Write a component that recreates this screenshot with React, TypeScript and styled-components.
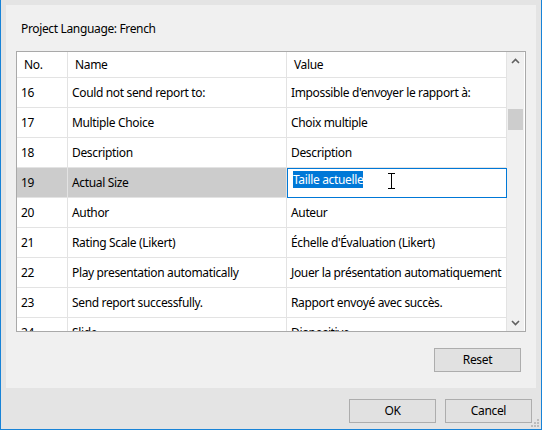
import React from "react"
import styled, { createGlobalStyle } from "styled-components"

const GlobalStyle = createGlobalStyle`
  body {
    margin: 0;
    background: #e4e4e4;
    font-family: "Noto Sans", "Liberation Sans", sans-serif;
    font-size: 12px;
    letter-spacing: -0.35px;
    color: #000;
  }
`

const rows = [
  { no: 16, name: "Could not send report to:", value: "Impossible d'envoyer le rapport à:" },
  { no: 17, name: "Multiple Choice", value: "Choix multiple" },
  { no: 18, name: "Description", value: "Description" },
  { no: 19, name: "Actual Size", value: "Taille actuelle", editing: true },
  { no: 20, name: "Author", value: "Auteur" },
  { no: 21, name: "Rating Scale (Likert)", value: "Échelle d'Évaluation (Likert)" },
  { no: 22, name: "Play presentation automatically", value: "Jouer la présentation automatiquement" },
  { no: 23, name: "Send report successfully.", value: "Rapport envoyé avec succès." },
  { no: 24, name: "Slide", value: "Diapositive" },
]

const Window = styled.div`
  width: 542px;
  height: 430px;
  box-sizing: border-box;
  border: 1px solid #1883d7;
  border-top: none;
  background: #e4e4e4;
  display: flex;
  flex-direction: column;
  padding: 5px 5px 0 5px;
`

const Panel = styled.div`
  background: #f0f0f0;
  height: 383px;
  box-sizing: border-box;
  padding: 0 10px 0 10px;
  display: flex;
  flex-direction: column;
`

const Label = styled.div`
  height: 46px;
  display: flex;
  align-items: center;
  padding-left: 5px;
  padding-top: 1px;
  box-sizing: border-box;
`

const GridBox = styled.div`
  height: 281px;
  box-sizing: border-box;
  border: 1px solid #a9a9a9;
  background: #fff;
  display: flex;
  overflow: hidden;
`

const Table = styled.div`
  width: 490px;
  display: grid;
  grid-template-columns: 51px 219px 220px;
  grid-auto-rows: 30px;
  grid-template-rows: 26px;
  align-content: start;
  overflow: hidden;
`

const Cell = styled.div<{ $head?: boolean; $sel?: boolean }>`
  box-sizing: border-box;
  border-right: 1px solid #e3e3e3;
  border-bottom: 1px solid #e3e3e3;
  display: flex;
  align-items: center;
  padding-left: ${(p) => (p.$head ? "7px" : "4px")};
  padding-bottom: 1px;
  white-space: nowrap;
  overflow: hidden;
  background: ${(p) => (p.$sel ? "#cccccc" : "transparent")};
`

const EditCell = styled.div`
  box-sizing: border-box;
  border: 1px solid #0078d7;
  background: #fff;
  position: relative;
  padding: 3px 0 0 5px;
  line-height: 15px;
`

const Selected = styled.span`
  background: #0078d7;
  color: #fff;
`

const Cursor = styled.svg`
  position: absolute;
  left: 99px;
  top: 4px;
`

const Scrollbar = styled.div`
  width: 17px;
  background: #f0f0f0;
  display: flex;
  flex-direction: column;
  align-items: center;
`

const Arrow = styled.div`
  height: 17px;
  display: flex;
  align-items: center;
  justify-content: center;
`

const Track = styled.div`
  flex: 1;
  width: 100%;
  padding-top: 40px;
  box-sizing: border-box;
`

const Thumb = styled.div`
  width: 15px;
  margin-left: 1px;
  height: 21px;
  background: #cdcdcd;
`

const ResetRow = styled.div`
  display: flex;
  justify-content: flex-end;
  padding: 16px 5px 0 0;
`

const Button = styled.button`
  width: 87px;
  height: 24px;
  box-sizing: border-box;
  border: 1px solid #adadad;
  background: #e1e1e1;
  font-family: "Noto Sans", "Liberation Sans", sans-serif;
  font-size: 12px;
  letter-spacing: -0.35px;
  color: #000;
  padding: 0 0 1px;
`

const Footer = styled.div`
  flex: 1;
  display: flex;
  justify-content: flex-end;
  align-items: flex-start;
  gap: 9px;
  padding: 11px 4px 0 0;
  position: relative;
`

const Grip = styled.svg`
  position: absolute;
  right: -4px;
  bottom: 1px;
`

const Chevron = ({ up }: { up?: boolean }) => (
  <svg width="9" height="6" viewBox="0 0 9 6">
    <path
      d={up ? "M1 5 L4.5 1.5 L8 5" : "M1 1 L4.5 4.5 L8 1"}
      fill="none"
      stroke="#606060"
      strokeWidth="1.6"
    />
  </svg>
)

export default function App() {
  return (
    <>
      <GlobalStyle />
      <Window>
        <Panel>
          <Label>Project Language: French</Label>
          <GridBox>
            <Table>
              <Cell $head>No.</Cell>
              <Cell $head>Name</Cell>
              <Cell $head>Value</Cell>
              {rows.map((r) => (
                <React.Fragment key={r.no}>
                  <Cell $sel={r.editing}>{r.no}</Cell>
                  <Cell $sel={r.editing}>{r.name}</Cell>
                  {r.editing ? (
                    <EditCell>
                      <Selected>{r.value}</Selected>
                      <Cursor width="9" height="16" viewBox="0 0 9 16">
                        <path d="M1 0.5 H8 M4.5 0.5 V15.5 M1 15.5 H8" stroke="#000" strokeWidth="1" fill="none" />
                      </Cursor>
                    </EditCell>
                  ) : (
                    <Cell>{r.value}</Cell>
                  )}
                </React.Fragment>
              ))}
            </Table>
            <Scrollbar>
              <Arrow>
                <Chevron up />
              </Arrow>
              <Track>
                <Thumb />
              </Track>
              <Arrow>
                <Chevron />
              </Arrow>
            </Scrollbar>
          </GridBox>
          <ResetRow>
            <Button>Reset</Button>
          </ResetRow>
        </Panel>
        <Footer>
          <Button>OK</Button>
          <Button>Cancel</Button>
          <Grip width="10" height="10" viewBox="0 0 10 10">
            {[
              [7, 1],
              [4, 4],
              [7, 4],
              [1, 7],
              [4, 7],
              [7, 7],
            ].map(([x, y]) => (
              <rect key={`${x}-${y}`} x={x} y={y} width="2" height="2" fill="#bcbcbc" />
            ))}
          </Grip>
        </Footer>
      </Window>
    </>
  )
}
